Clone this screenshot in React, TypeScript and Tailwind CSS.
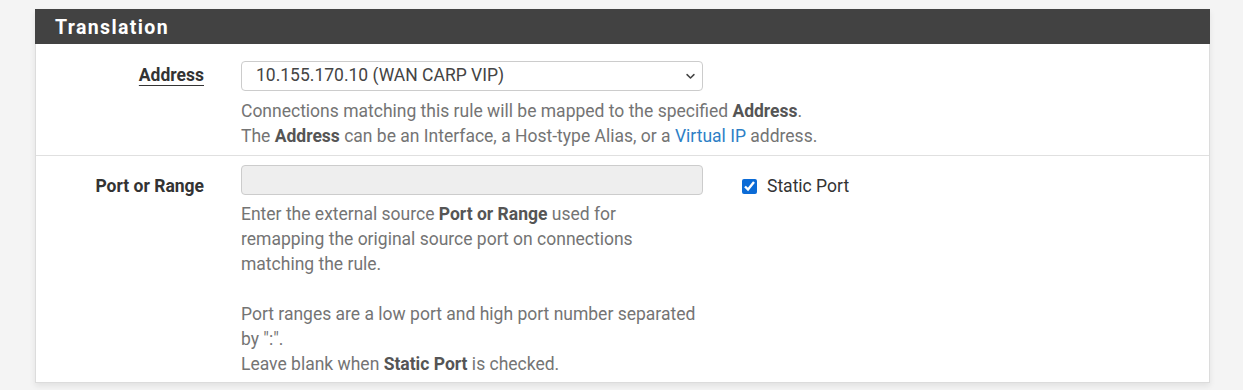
import React from 'react'

const font = { fontFamily: 'Roboto, "Noto Sans", "Liberation Sans", sans-serif' }

function Chevron() {
  return (
    <svg width="11" height="11" viewBox="0 0 16 16" className="absolute right-[7px] top-1/2 -translate-y-1/2 pointer-events-none">
      <path d="M3 6l5 5 5-5" fill="none" stroke="#444" strokeWidth="2.2" strokeLinecap="round" strokeLinejoin="round" />
    </svg>
  )
}

export default function App() {
  return (
    <div className="min-h-screen bg-[#f4f4f4] pt-[9px] pl-[35px] text-[17.5px]" style={font}>
      <div className="w-[1175px] bg-white border border-[#dcdcdc] shadow-[0_3px_6px_rgba(0,0,0,0.08)]">
        {/* Panel heading */}
        <div className="h-[35px] bg-[#424242] -mx-px -mt-px flex items-center pl-[20px] pt-[3px]">
          <h2 className="text-white font-bold text-[19.5px] tracking-[0.07em] leading-none">Translation</h2>
        </div>

        {/* Address */}
        <div className="flex pt-[17px] pb-[6px] border-b border-[#e0e0e0]">
          <div className="w-[168px] text-right leading-[25px] pt-[2px]">
            <span className="font-bold text-[#333] underline underline-offset-[4px] decoration-[1px]">Address</span>
          </div>
          <div className="ml-[37px] w-[462px]">
            <div className="relative">
              <select
                className="appearance-none w-full h-[30px] border border-[#cccccc] rounded-[4px] bg-white pl-[14px] text-[17.5px] text-[#444] leading-none"
                style={font}
                defaultValue="wan"
              >
                <option value="wan">10.155.170.10 (WAN CARP VIP)</option>
              </select>
              <Chevron />
            </div>
            <div className="mt-[8px] leading-[25px] text-[#747474] whitespace-nowrap">
              <div>
                Connections matching this rule will be mapped to the specified <b className="text-[#555]">Address</b>.
              </div>
              <div>
                The <b className="text-[#555]">Address</b> can be an Interface, a Host-type Alias, or a{' '}
                <a className="text-[#2e7fc6]">Virtual IP</a> address.
              </div>
            </div>
          </div>
        </div>

        {/* Port or Range */}
        <div className="flex pt-[9px] pb-[5px]">
          <div className="w-[168px] text-right leading-[25px] pt-[9px]">
            <span className="font-bold text-[#333]">Port or Range</span>
          </div>
          <div className="ml-[37px] w-[462px]">
            <input
              disabled
              className="block w-full h-[30px] border border-[#cccccc] rounded-[4px] bg-[#eeeeee]"
            />
            <div className="mt-[7px] leading-[25px] text-[#747474]">
              Enter the external source <b className="text-[#555]">Port or Range</b> used for
              <br />
              remapping the original source port on connections matching the rule.
              <br />
              <br />
              Port ranges are a low port and high port number separated by ":".
              <br />
              Leave blank when <b className="text-[#555]">Static Port</b> is checked.
            </div>
          </div>
          <div className="ml-[39px] pt-[9px] flex items-start">
            <label className="flex items-center h-[25px] text-[#333]">
              <input type="checkbox" defaultChecked className="w-[15px] h-[15px] m-0 accent-[#0b6bd6]" />
              <span className="ml-[10px]">Static Port</span>
            </label>
          </div>
        </div>
      </div>
    </div>
  )
}
